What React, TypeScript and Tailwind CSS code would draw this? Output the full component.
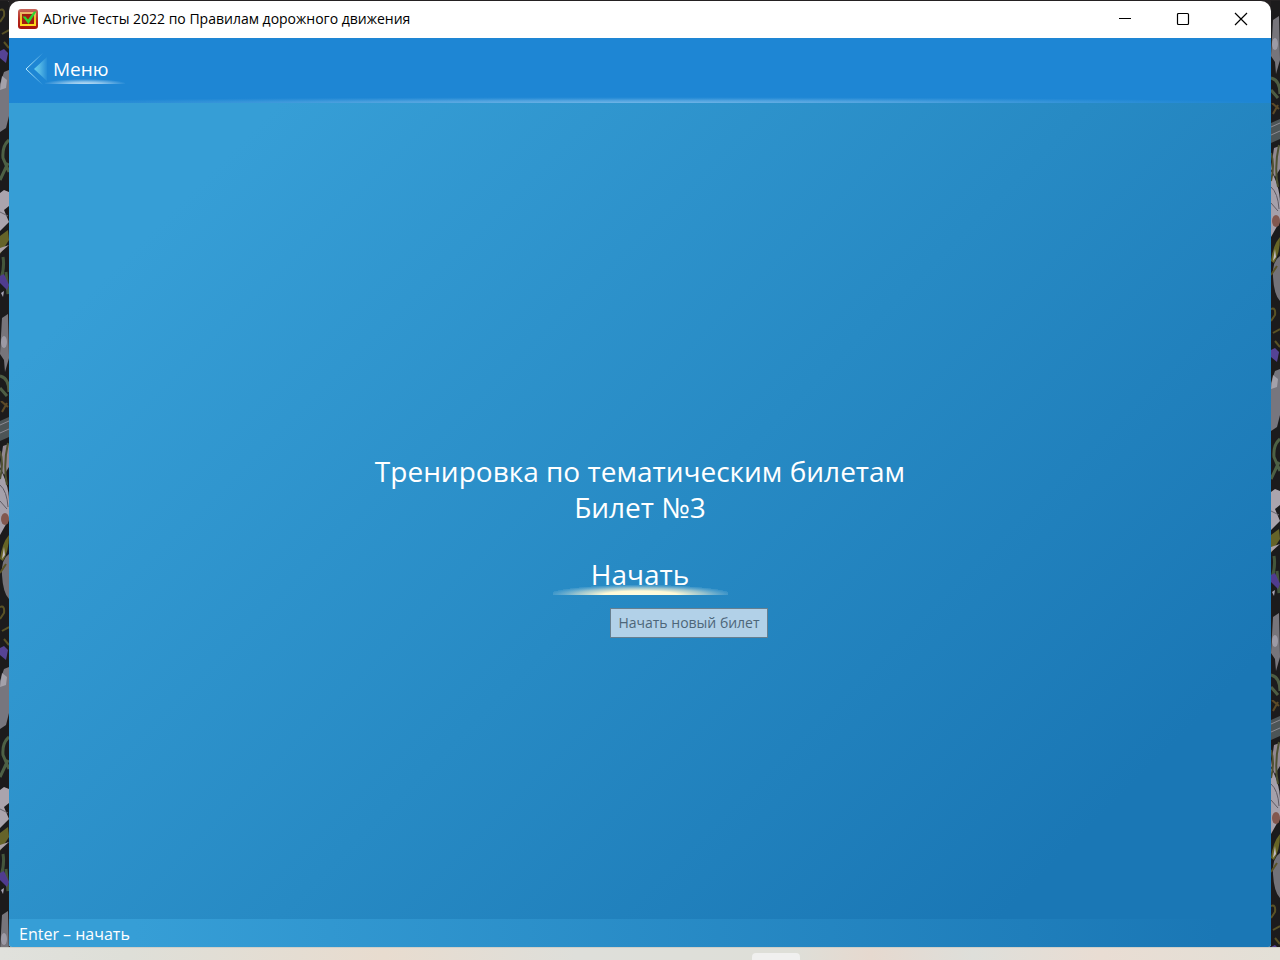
import type { ReactNode } from "react";

function Backdrop({ id, shift }: { id: string; shift: number }) {
  return (
    <svg className="w-[9px] shrink-0 self-stretch h-auto" aria-hidden="true">
      <defs>
        <pattern id={id} width="9" height="597" patternUnits="userSpaceOnUse" y={shift}>
          <rect width="9" height="597" fill="#1c1b1c" />
          <path d="M0 20 L9 16 L9 36 L0 40Z" fill="#4d5557" />
          <path d="M0 24 L9 20 M0 32 L9 28" stroke="#8b8a92" />
          <path d="M3 45 L9 43 L9 66 L4 74 L0 66Z" fill="#918891" />
          <path d="M0 68 C5 76 9 88 9 100 L9 118 L0 134Z" fill="#a5a0aa" />
          <path d="M0 50 Q4 62 0 78 M8 42 Q3 64 7 84" fill="none" stroke="#4e5132" strokeWidth="2" />
          <path d="M0 84 Q7 90 8 106 M0 100 L7 108" fill="none" stroke="#5f5a63" />
          <ellipse cx="5" cy="118" rx="4" ry="6" fill="#82584f" />
          <path d="M9 134 Q2 142 0 158 L3 160 Q9 150 9 134Z" fill="#666426" />
          <path d="M4 146 L5 154 L2 158Z" fill="#c1bbc0" />
          <path d="M9 153 Q1 158 2 174 Q3 192 9 198Z" fill="#737278" />
          <path d="M0 172 L6 163 M0 206 Q5 204 4 212 L0 218 M2 230 L9 226 M4 238 L9 244" fill="none" stroke="#595226" strokeWidth="2" />
          <path d="M0 247 L4 245 L8 249 L6 259 L0 254Z" fill="#554395" />
          <path d="M4 268 L9 266 L9 312 L6 324 L0 328 L0 280Z" fill="#77767e" />
          <path d="M2 272 L7 276 L6 284 L0 286Z" fill="#a3a1aa" />
          <path d="M9 336 Q2 342 3 354 L9 368 M0 376 L8 359" fill="none" stroke="#4d6045" strokeWidth="3" />
          <path d="M4 386 L9 388 L9 402 L4 406 L9 418 L0 427 L0 389Z" fill="#aaa4ad" />
          <path d="M0 408 L8 412" stroke="#67656c" />
          <path d="M0 432 L8 426 L9 436 L0 450Z" fill="#656329" />
          <path d="M0 444 L9 441 L0 449Z" fill="#aaa1a5" />
          <path d="M3 453 Q5 464 0 478 M6 468 L8 490" fill="none" stroke="#44563c" strokeWidth="3" />
          <path d="M0 472 L4 470 L9 481 L7 486 L0 479Z" fill="#503c8f" />
          <path d="M1 489 L4 487 L3 493Z" fill="#a6a3b3" />
          <path d="M2 514 L8 510 L9 554 L5 568 L4 556 L0 550Z" fill="#77757b" />
          <ellipse cx="4" cy="538" rx="3" ry="6" fill="#9c9aa5" />
          <path d="M0 572 Q9 574 9 588 M0 584 L7 592" fill="none" stroke="#4e5d44" strokeWidth="3" />
          <path d="M1 0 L8 6 M2 11 L7 2" stroke="#5c4a28" strokeWidth="2" />
        </pattern>
      </defs>
      <rect width="9" height="100%" fill={`url(#${id})`} />
    </svg>
  );
}

function AppIcon() {
  return (
    <svg width="20" height="20" viewBox="0 0 20 20" aria-hidden="true">
      <defs>
        <linearGradient id="iconRed" x1="0" y1="0" x2="0" y2="1">
          <stop offset="0" stopColor="#c8675c" />
          <stop offset="0.5" stopColor="#b52a1e" />
          <stop offset="1" stopColor="#a9140c" />
        </linearGradient>
        <linearGradient id="iconGold" x1="0" y1="0" x2="0" y2="1">
          <stop offset="0" stopColor="#eab56b" />
          <stop offset="0.5" stopColor="#f2c21c" />
          <stop offset="1" stopColor="#ffdc1c" />
        </linearGradient>
      </defs>
      <rect width="20" height="20" rx="3" fill="url(#iconRed)" />
      <rect x="3" y="4" width="14" height="12" fill="#a31b10" stroke="url(#iconGold)" strokeWidth="2" />
      <path d="M4.500 7.500 L7.500 7.500 L10 10.500 L16 2.500 L18.500 2.500 L10.500 15 Z" fill="#2ed52e" />
    </svg>
  );
}

function CaptionButton({ label, children }: { label: string; children: ReactNode }) {
  return (
    <button type="button" aria-label={label} className="flex h-full w-[58px] items-center justify-center text-black">
      <svg width="14" height="14" viewBox="0 0 14 14" fill="none" stroke="currentColor" strokeWidth="1.2" aria-hidden="true">
        {children}
      </svg>
    </button>
  );
}

function BackArrow() {
  return (
    <svg width="26" height="34" viewBox="0 0 26 34" fill="none" aria-hidden="true">
      <defs>
        <linearGradient id="arrowFill" x1="9" y1="0" x2="23" y2="0" gradientUnits="userSpaceOnUse">
          <stop offset="0" stopColor="#63cdf0" />
          <stop offset="0.4" stopColor="#55b8e5" />
          <stop offset="1" stopColor="#1e86d4" />
        </linearGradient>
        <linearGradient id="arrowLine" x1="0" y1="0" x2="18" y2="0" gradientUnits="userSpaceOnUse">
          <stop offset="0" stopColor="#c8f2ff" />
          <stop offset="0.5" stopColor="#83cdf1" />
          <stop offset="1" stopColor="#1e86d4" />
        </linearGradient>
      </defs>
      <path d="M18 1 L1 17 L18 33" stroke="url(#arrowLine)" />
      <path d="M9 17 L22 5 L22 29 Z" fill="url(#arrowFill)" />
    </svg>
  );
}

export default function App() {
  return (
    <div className="flex min-h-screen flex-col bg-[#242122] font-['Open_Sans','Noto_Sans',sans-serif]">
      <div className="flex flex-1 pt-px">
        <Backdrop id="leftFlowers" shift={400} />
        <div className="flex min-w-0 flex-1 flex-col overflow-hidden rounded-t-[10px] rounded-b-[3px] bg-white">
          <div className="flex h-[37px] items-center pl-[9px] pr-px pb-px">
            <AppIcon />
            <h1 className="ml-[5px] flex-1 truncate text-[14px] leading-5 text-black">
              ADrive Тесты 2022 по Правилам дорожного движения
            </h1>
            <CaptionButton label="Свернуть">
              <path d="M1 6.5H13" />
            </CaptionButton>
            <CaptionButton label="Развернуть">
              <rect x="1.5" y="1.5" width="11" height="11" rx="1" />
            </CaptionButton>
            <CaptionButton label="Закрыть">
              <path d="M1 1 L13 13 M13 1 L1 13" />
            </CaptionButton>
          </div>

          <header className="relative flex h-[65px] items-center bg-[#1e86d4] px-4 pb-1">
            <button type="button" className="relative flex items-center text-white">
              <BackArrow />
              <svg className="absolute left-5 bottom-0.5 h-[5px] w-20" viewBox="0 0 80 5" preserveAspectRatio="none" aria-hidden="true">
                <defs>
                  <radialGradient id="menuGlow" cx="40" cy="5" r="42" gradientUnits="userSpaceOnUse" gradientTransform="matrix(1 0 0 .119 0 4.405)">
                    <stop offset="0" stopColor="#b9dcf3" />
                    <stop offset="0.4" stopColor="#8fc5ec" />
                    <stop offset="1" stopColor="#8fc5ec" stopOpacity="0" />
                  </radialGradient>
                </defs>
                <rect width="80" height="5" fill="url(#menuGlow)" />
              </svg>
              <span className="relative ml-0.5 text-[19px] leading-6">Меню</span>
            </button>
            <svg className="absolute bottom-0 left-0 h-1.5 w-full" viewBox="0 0 1262 6" preserveAspectRatio="none" aria-hidden="true">
              <defs>
                <radialGradient id="headerGlow" cx="0.5" cy="1" r="0.5" gradientTransform="matrix(1 0 0 2 0 -1)">
                  <stop offset="0" stopColor="#72b6e8" />
                  <stop offset="0.45" stopColor="#5aa8e1" stopOpacity="0.8" />
                  <stop offset="1" stopColor="#3d9bdc" stopOpacity="0" />
                </radialGradient>
              </defs>
              <rect width="1262" height="6" fill="url(#headerGlow)" />
            </svg>
          </header>

          <main className="flex flex-1 flex-col items-center justify-center bg-[linear-gradient(135deg,#369ed6_13%,#278ac4_52%,#1a77b5_87%)] px-4 pt-[69px] text-white">
            <h2 className="text-center text-[28px] leading-9">
              Тренировка по тематическим билетам
              <br />
              Билет №3
            </h2>
            <button type="button" className="relative mt-[28px] flex h-[42px] w-[175px] justify-center text-[28px] leading-[42px]">
              <svg className="absolute bottom-0 left-0 h-2.5 w-full" viewBox="0 0 175 10" preserveAspectRatio="none" aria-hidden="true">
                <defs>
                  <radialGradient id="startGlow" cx="0.5" cy="1" r="0.53" gradientTransform="matrix(1 0 0 1.9 0 -0.9)">
                    <stop offset="0" stopColor="#fffde2" />
                    <stop offset="0.4" stopColor="#fff9d6" />
                    <stop offset="0.7" stopColor="#d5e2d3" stopOpacity="0.65" />
                    <stop offset="1" stopColor="#9acbe3" stopOpacity="0.12" />
                    <stop offset="1" stopColor="#9acbe3" stopOpacity="0" />
                  </radialGradient>
                </defs>
                <rect width="175" height="10" fill="url(#startGlow)" />
              </svg>
              <span className="relative">Начать</span>
            </button>
            <div role="tooltip" className="ml-[98px] mt-[13px] border border-[#667f90] bg-[#b2d1e8] px-[7px] py-1 text-[14px] leading-5 text-[#4d6679]">
              Начать новый билет
            </div>
          </main>

          <footer className="flex h-7 items-center bg-[linear-gradient(to_right,#369ed6_10%,#1a77b5_96%)] px-2.5 pt-0.5 text-[16px] leading-5 text-white">
            Enter – начать
          </footer>
        </div>
        <Backdrop id="rightFlowers" shift={102} />
      </div>
      <div className="flex h-[13px] items-end justify-center border-t border-[#cfcfc9] bg-[linear-gradient(to_right,#e0e1dc,#dedfd8_10%,#e8dccf_30%,#dedfda_45%,#dedfd8_62%,#e6d9cf_68%,#dedfda_76%,#e9ddd3_86%,#e3e0d7)]">
        <div className="ml-[272px] h-[7px] w-12 rounded-t-[4px] bg-[#f0f0ef]" />
      </div>
    </div>
  );
}
